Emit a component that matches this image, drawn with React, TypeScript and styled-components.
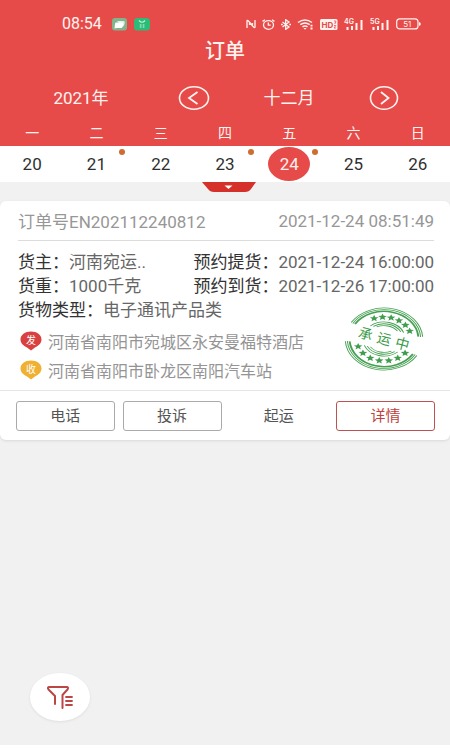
import React from "react";
import styled, { createGlobalStyle, css } from "styled-components";

const RED = "#e74b49";
const CJK = '"Noto Sans CJK SC", sans-serif';

const GlobalStyle = createGlobalStyle`
  * { box-sizing: border-box; }
  body {
    margin: 0;
    background: #fff;
    font-family: Roboto, ${CJK};
    color: #333;
  }
  button {
    font: inherit;
    color: inherit;
    background: none;
    border: 0;
    padding: 0;
    cursor: pointer;
  }
`;

const Page = styled.div`
  min-height: calc(100vh - 5px);
  background: #f1f1f1;
`;

const Header = styled.header`
  background: ${RED};
  color: #fff3f0;
  padding-top: 14px;
`;

const StatusBar = styled.div`
  display: flex;
  align-items: center;
  justify-content: space-between;
  height: 20px;
  padding: 0 29px 0 62px;
`;

const StatusGroup = styled.div`
  display: flex;
  align-items: center;
  gap: 6px;
  svg { display: block; }
`;

const Clock = styled.time`
  font-size: 16px;
  line-height: 20px;
  margin-right: 4px;
`;

const Title = styled.h1`
  margin: 0;
  height: 34px;
  font-size: 20px;
  line-height: 34px;
  font-weight: 500;
  text-align: center;
`;

const Picker = styled.div`
  display: grid;
  grid-template-columns: 162fr 64fr 126fr 64fr 34fr;
  align-items: center;
  justify-items: center;
  height: 60px;
  font-size: 17px;
`;

const PickerValue = styled.span`
  padding-bottom: 3px;
`;

const ArrowButton = styled.button`
  display: flex;
`;

const Week = styled.div`
  display: grid;
  grid-template-columns: repeat(7, 1fr);
  text-align: center;
`;

const WeekdayRow = styled(Week)`
  height: 18px;
  font-size: 14px;
  line-height: 10px;
`;

const DateRow = styled(Week)`
  background: #fff;
  height: 36px;
  align-items: center;
  justify-items: center;
`;

const DayButton = styled.button<{ $active?: boolean; $marked?: boolean }>`
  position: relative;
  width: 42px;
  height: 34px;
  border-radius: 50%;
  font-size: 17px;
  line-height: 34px;
  color: #303030;
  ${(p) => p.$active && css`background: ${RED}; color: #fff0ed;`}
  ${(p) => p.$marked && css`
    &::after {
      content: "";
      position: absolute;
      top: 2px;
      right: -8px;
      width: 6px;
      height: 6px;
      border-radius: 50%;
      background: #cf6c30;
    }
  `}
`;

const Expander = styled.button`
  display: block;
  margin: 0 auto;
  width: 54px;
  height: 10px;
  svg { display: block; }
`;

const ExpanderRow = styled.div`
  height: 19px;
  padding-left: 8px;
`;

const Card = styled.article`
  background: #fff;
  border-radius: 6px;
  box-shadow: 0 1px 3px rgba(0, 0, 0, 0.1);
`;

const CardBody = styled.div`
  position: relative;
  padding: 0 16px 0 18px;
`;

const OrderHead = styled.div`
  display: flex;
  align-items: center;
  justify-content: space-between;
  height: 40px;
  border-bottom: 1px solid #dcdcdc;
  color: #979797;
  font-size: 17px;
  white-space: nowrap;
`;

const Details = styled.dl`
  margin: 0;
  padding: 9px 0 4px;
`;

const DetailRow = styled.div`
  display: flex;
  justify-content: space-between;
`;

const Field = styled.div`
  display: flex;
  height: 24px;
  font-size: 17px;
  line-height: 24px;
  white-space: nowrap;
  dt { color: #333; }
  dd { margin: 0; color: #666; }
`;

const Addresses = styled.ul`
  list-style: none;
  margin: 0;
  padding: 0 0 6px;
`;

const Address = styled.li`
  display: flex;
  align-items: center;
  gap: 6px;
  height: 29px;
  padding-left: 2px;
  font-size: 16px;
  color: #949494;
  white-space: nowrap;
`;

const StampPlace = styled.div`
  position: absolute;
  top: 105px;
  right: 25px;
  svg { display: block; }
`;

const Actions = styled.div`
  display: grid;
  grid-template-columns: repeat(4, 1fr);
  gap: 8px;
  padding: 10px 15px 9px 16px;
  border-top: 1px solid #e6e6e6;
`;

const Action = styled.button<{ $tone?: "plain" | "primary" }>`
  height: 30px;
  border: 1px solid #aaa;
  border-radius: 3px;
  font-size: 15px;
  line-height: 28px;
  color: #555;
  ${(p) => p.$tone === "plain" && css`border-color: transparent;`}
  ${(p) => p.$tone === "primary" && css`border-color: #bd5350; color: #c1403e;`}
`;

const FilterButton = styled.button`
  position: fixed;
  left: 30px;
  bottom: 29px;
  display: flex;
  align-items: center;
  justify-content: center;
  width: 60px;
  height: 48px;
  border-radius: 50%;
  background: #fff;
  box-shadow: 0 1px 3px rgba(0, 0, 0, 0.08);
`;

const ChatBadge = () => (
  <svg width="16" height="13" viewBox="0 0 16 13" aria-hidden="true">
    <rect width="15" height="12.5" rx="3" fill="#83b38d" />
    <path d="M5 3h6.5q1.5 0 1.3 1.5l-.6 2.5q-.3 1.5-2 1.5" fill="#dff3e3" />
    <path d="M4 4.5h6q1.5 0 1.2 1.5l-.5 2.5q-.3 1.5-1.8 1.5H4.5l-2 .5.5-4.5q.1-1.5 1-1.5z" fill="#fff" />
  </svg>
);

const GreenBadge = () => (
  <svg width="16" height="13" viewBox="0 0 16 13" aria-hidden="true">
    <rect width="16" height="12.5" rx="3.5" fill="#2bbd78" />
    <path d="M5 2.5Q8 6 11 2.5" fill="none" stroke="#bff0d5" strokeWidth="1.2" />
    <path d="M5.8 6.5h1.7v1H5.8zM8.7 6.5h1.7v1H8.7zM5.8 8.5h1.7v1H5.8zM8.7 8.5h1.7v1H8.7z" fill="#d5f7e4" />
  </svg>
);

const NfcIcon = () => (
  <svg width="10" height="10" viewBox="0 0 10 10" fill="none" stroke="currentColor" strokeWidth="1.3" aria-hidden="true">
    <path d="M1 9V2.2Q1 .8 2.2 1.700L6.500 6.500V4M9 1v6.800q0 1.400-1.200.5L3.500 3.500V6" />
  </svg>
);

const AlarmIcon = () => (
  <svg width="13" height="11" viewBox="0 0 13 11" fill="none" stroke="currentColor" strokeWidth="1.3" aria-hidden="true">
    <ellipse cx="6.5" cy="6" rx="5" ry="4.3" />
    <path d="M6.3 3.6v2.6h2.4M.6 2.4 3 .7M12.4 2.4 10 .7" />
  </svg>
);

const BluetoothIcon = () => (
  <svg width="10" height="11" viewBox="0 0 10 11" fill="none" stroke="currentColor" strokeWidth="1.3" aria-hidden="true">
    <path d="M1.5 3l6.5 5-3.3 2.3V.7L8 3 1.5 8" />
    <path d="M0 5.5h1.8M8.2 5.5H10" />
  </svg>
);

const WifiIcon = () => (
  <svg width="17" height="11" viewBox="0 0 17 11" fill="none" stroke="currentColor" strokeWidth="1.5" aria-hidden="true">
    <path d="M1 3.5Q8 -1.5 15 3.5M3.3 5.7Q8 2.3 12.7 5.7M5.5 7.9Q8 6 10.5 7.9" />
    <path d="M6.5 9h3L8 10.8z" fill="currentColor" stroke="none" />
    <path d="M14.5 5.7v1.8M14.5 8.6v1.8" strokeWidth="2" />
  </svg>
);

const HdIcon = () => (
  <svg width="18" height="11" viewBox="0 0 18 11" aria-hidden="true">
    <rect width="17.5" height="11" rx="1.5" fill="currentColor" />
    <text x="1.5" y="8.7" fontFamily="Inter, sans-serif" fontSize="8" fontWeight="700" fill={RED}>HD</text>
    <path d="M14 2h1.8v1.4l-1.2.8h1.2M14 6.5h1.8L14 9h2" fill="none" stroke={RED} strokeWidth=".8" />
  </svg>
);

const SignalIcon = ({ label }: { label: string }) => (
  <svg width="20" height="13" viewBox="0 0 20 13" fill="currentColor" aria-hidden="true">
    <text x="0" y="6" fontFamily="Inter, sans-serif" fontSize="7" fontWeight="600">{label}</text>
    <path d="M2.5 9h2v3h-2zM7 8h2v4H7zM11.5 5h2v7h-2zM16.5 2h2v10h-2z" />
  </svg>
);

const BatteryIcon = () => (
  <svg width="25" height="12" viewBox="0 0 25 12" aria-hidden="true">
    <rect x=".7" y=".9" width="21.3" height="10" rx="3" fill="none" stroke="currentColor" strokeWidth="1.2" />
    <path d="M23 4q1.8.3 1.8 2T23 8z" fill="currentColor" />
    <text x="11.3" y="8.8" textAnchor="middle" fontFamily="Inter, sans-serif" fontSize="8" fill="currentColor">51</text>
  </svg>
);

const ArrowIcon = ({ next }: { next?: boolean }) => (
  <svg width="32" height="26" viewBox="0 0 32 26" fill="none" stroke="currentColor" strokeWidth="1.6" aria-hidden="true">
    <ellipse cx="16" cy="13" rx={next ? 13.5 : 14.5} ry="11.3" />
    <path d={next ? "M13 7l7.5 6L13 19" : "M19.5 7 11 13l8.5 6"} strokeWidth="1.8" />
  </svg>
);

const Pin = ({ color, text }: { color: string; text: string }) => (
  <svg width="22" height="20" viewBox="0 0 22 20" aria-hidden="true">
    <path d="M11 .5C17 .5 21.5 4 21.5 8.5c0 3.8-2.8 6-6.5 8l-4 3-4-3c-3.7-2-6.5-4.2-6.5-8C.5 4 5 .5 11 .5z" fill={color} />
    <text x="11" y="12.5" textAnchor="middle" fontFamily='"Noto Sans CJK SC", sans-serif' fontSize="10" fill="#fff">{text}</text>
  </svg>
);

const polar = (r: number, deg: number) => {
  const a = (deg * Math.PI) / 180;
  return [r * Math.cos(a), r * Math.sin(a)];
};

const arc = (r: number, from: number, to: number) => {
  const [x1, y1] = polar(r, from);
  const [x2, y2] = polar(r, to);
  return `M${x1} ${y1}A${r} ${r} 0 0 1 ${x2} ${y2}`;
};

const star = (deg: number) => {
  const [cx, cy] = polar(22, deg);
  return (
    Array.from({ length: 10 }, (_, i) => {
      const [x, y] = polar(i % 2 ? 1.6 : 3.6, -104 + i * 36);
      return `${i ? "L" : "M"}${cx + x} ${cy + y}`;
    }).join("") + "z"
  );
};

const RINGS = [
  { r: 31, half: 72, w: 0.8 },
  { r: 29.4, half: 72, w: 0.8 },
  { r: 27.6, half: 71, w: 1.5 },
  { r: 17, half: 54, w: 0.8 },
  { r: 15.2, half: 48, w: 0.8 },
  { r: 13.4, half: 40, w: 0.8 },
];
const STARS = [-125, -107, -89, -71, -53, -35, 26, 46, 66, 86, 106, 126, 146];

const Stamp = () => (
  <svg width="82" height="66" viewBox="-41 -33 82 66" role="img" aria-label="承运中">
    <g transform="scale(1.25 1) rotate(14)">
      {RINGS.map(({ r, half, w }) => (
        <path
          key={r}
          d={arc(r, -90 - half, -90 + half) + arc(r, 90 - half, 90 + half)}
          fill="none"
          stroke="#45a052"
          strokeWidth={w}
        />
      ))}
      {STARS.map((deg) => (
        <path key={deg} d={star(deg)} fill="#419d4e" />
      ))}
    </g>
    <g transform="rotate(15)" fontFamily='"Noto Sans CJK SC", sans-serif' fontSize="14" fill="#3b9a48" textAnchor="middle">
      <text x="-19" y="5">承</text>
      <text x="0" y="5">运</text>
      <text x="19" y="5">中</text>
    </g>
  </svg>
);

const FilterIcon = () => (
  <svg width="28" height="24" viewBox="0 0 28 24" fill="none" stroke="#bb4644" strokeWidth="2" strokeLinecap="round" strokeLinejoin="round" aria-hidden="true">
    <path d="M9 19v-8L2.5 4.5Q1 2 3.5 2h17q2.5 0 1 2.5L16.5 10v13" />
    <path d="M20 12h6M20 16h6M20 20h6" strokeWidth="1.8" />
  </svg>
);

const WEEKDAYS = ["一", "二", "三", "四", "五", "六", "日"];
const DAYS = [
  { day: 20 },
  { day: 21, marked: true },
  { day: 22 },
  { day: 23, marked: true },
  { day: 24, marked: true, active: true },
  { day: 25 },
  { day: 26 },
];

export default function App() {
  return (
    <>
      <GlobalStyle />
      <Page>
        <Header>
          <StatusBar>
            <StatusGroup>
              <Clock>08:54</Clock>
              <ChatBadge />
              <GreenBadge />
            </StatusGroup>
            <StatusGroup>
              <NfcIcon />
              <AlarmIcon />
              <BluetoothIcon />
              <WifiIcon />
              <HdIcon />
              <SignalIcon label="4G" />
              <SignalIcon label="5G" />
              <BatteryIcon />
            </StatusGroup>
          </StatusBar>
          <Title>订单</Title>
          <Picker>
            <PickerValue>2021年</PickerValue>
            <ArrowButton aria-label="上个月"><ArrowIcon /></ArrowButton>
            <PickerValue>十二月</PickerValue>
            <ArrowButton aria-label="下个月"><ArrowIcon next /></ArrowButton>
          </Picker>
          <WeekdayRow>
            {WEEKDAYS.map((d) => <span key={d}>{d}</span>)}
          </WeekdayRow>
          <DateRow>
            {DAYS.map(({ day, marked, active }) => (
              <DayButton key={day} $marked={marked} $active={active}>{day}</DayButton>
            ))}
          </DateRow>
        </Header>
        <ExpanderRow>
          <Expander aria-label="展开日历">
            <svg width="54" height="10" viewBox="0 0 54 10">
              <path d="M0 0h54l-5 7q-2 3-6 3H12q-4 0-6-3z" fill="#d6302b" />
              <path d="M22.5 3.5h8L26.5 7z" fill="#fff" />
            </svg>
          </Expander>
        </ExpanderRow>
        <Card>
          <CardBody>
            <OrderHead>
              <span>订单号EN202112240812</span>
              <time>2021-12-24 08:51:49</time>
            </OrderHead>
            <Details>
              <DetailRow>
                <Field><dt>货主：</dt><dd>河南宛运..</dd></Field>
                <Field><dt>预约提货：</dt><dd>2021-12-24 16:00:00</dd></Field>
              </DetailRow>
              <DetailRow>
                <Field><dt>货重：</dt><dd>1000千克</dd></Field>
                <Field><dt>预约到货：</dt><dd>2021-12-26 17:00:00</dd></Field>
              </DetailRow>
              <Field><dt>货物类型：</dt><dd>电子通讯产品类</dd></Field>
            </Details>
            <Addresses>
              <Address><Pin color="#d8413f" text="发" />河南省南阳市宛城区永安曼福特酒店</Address>
              <Address><Pin color="#f0b032" text="收" />河南省南阳市卧龙区南阳汽车站</Address>
            </Addresses>
            <StampPlace><Stamp /></StampPlace>
          </CardBody>
          <Actions>
            <Action>电话</Action>
            <Action>投诉</Action>
            <Action $tone="plain">起运</Action>
            <Action $tone="primary">详情</Action>
          </Actions>
        </Card>
        <FilterButton aria-label="筛选"><FilterIcon /></FilterButton>
      </Page>
    </>
  );
}
